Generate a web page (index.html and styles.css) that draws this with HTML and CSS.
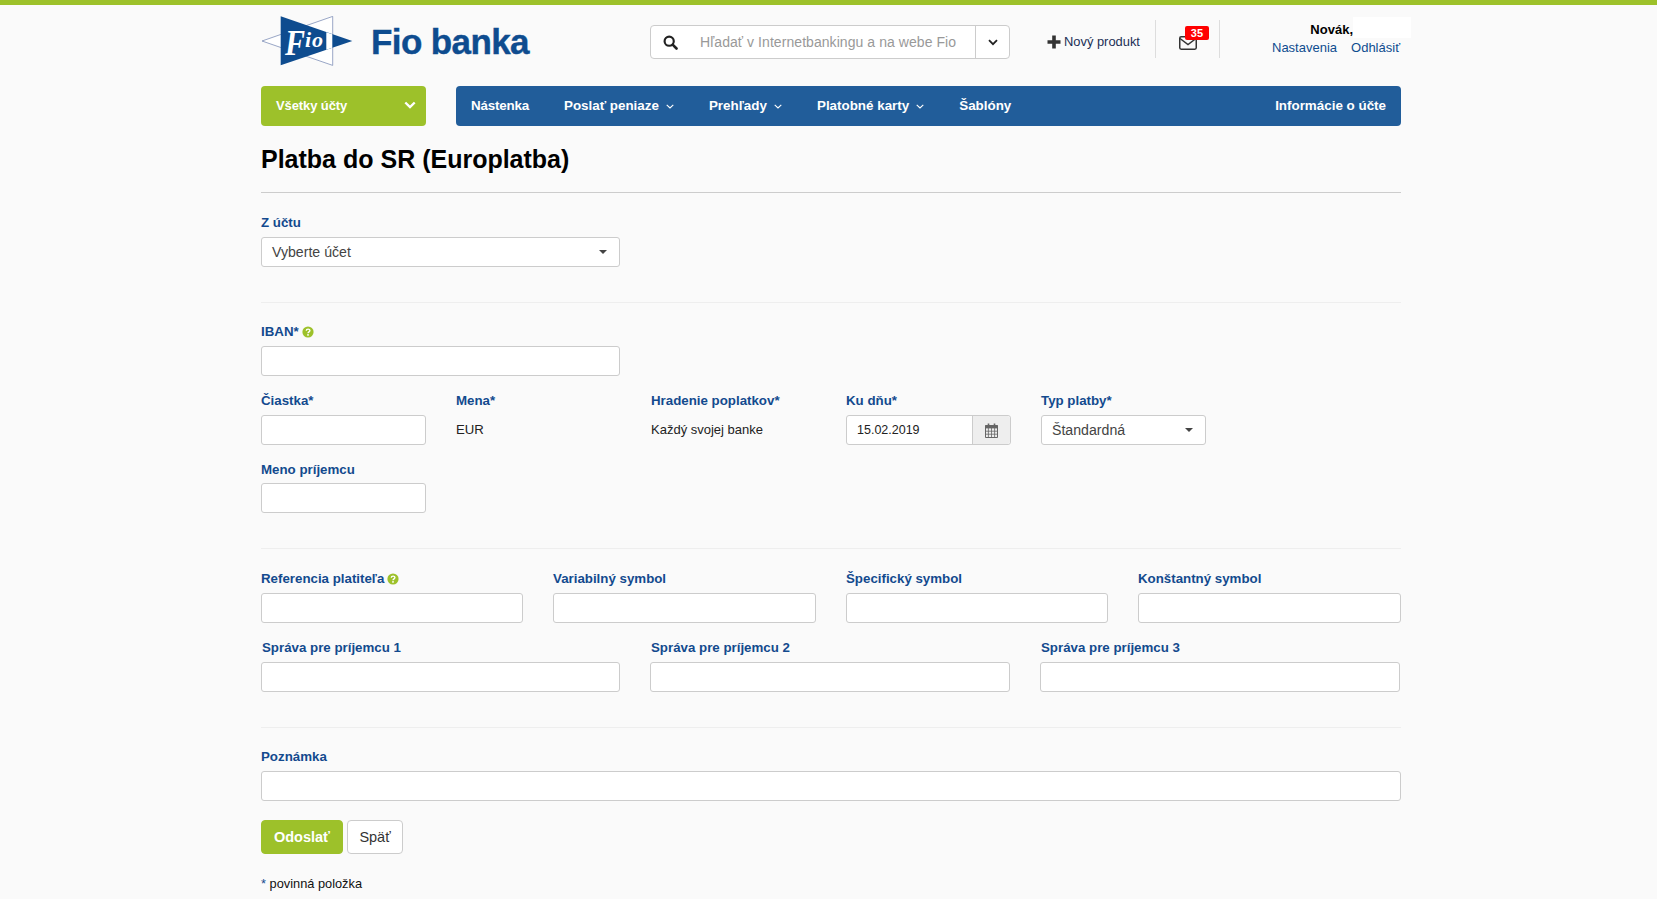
FILE: index.html
```html
<!DOCTYPE html>
<html lang="sk">
<head>
<meta charset="utf-8">
<title>Fio banka</title>
<link rel="stylesheet" href="styles.css">
</head>
<body>
<div class="topline"></div>
<div class="page">
  <header class="header">
    <a class="brand">
      <svg class="logo" viewBox="0 0 92 50" width="92" height="50">
        <polygon points="1,25 71.7,0.4 71.7,49.4" fill="#fff" stroke="#7f8fb8" stroke-width="0.8"/>
        <polygon points="19.7,0.3 91.3,25 19.7,49.3" fill="#0e4c8f"/>
        <polygon points="65.3,16.2 71.3,18.2 71.3,31.8 65.3,33.8" fill="#fff"/>
        <text transform="translate(24 39) scale(1 1.2)" class="logo-f">F</text>
        <text x="44" y="31" class="logo-io">io</text>
      </svg>
      <span class="wordmark">Fio banka</span>
    </a>
    <div class="search">
      <span class="search-icon">
        <svg viewBox="0 0 16 16" width="15" height="15"><circle cx="6.6" cy="6.6" r="4.9" fill="none" stroke="#222" stroke-width="2.3"/><path d="M10.3 10.3 14.4 14.4" stroke="#222" stroke-width="2.8" stroke-linecap="round"/></svg>
      </span>
      <span class="search-text">Hľadať v Internetbankingu a na webe Fio</span>
      <span class="search-toggle">
        <svg viewBox="0 0 10 7" width="10" height="7"><path d="M1 1.2 5 5.2 9 1.2" fill="none" stroke="#222" stroke-width="1.8"/></svg>
      </span>
    </div>
    <a class="new-product">
      <svg viewBox="0 0 14 14" width="14" height="14"><path d="M7 0.5V13.5M0.5 7H13.5" stroke="#333" stroke-width="3.6"/></svg>
      <span>Nový produkt</span>
    </a>
    <div class="mail">
      <svg viewBox="0 0 18 14" width="18" height="14"><rect x="0.75" y="0.75" width="16.5" height="12.5" rx="1.4" fill="none" stroke="#333" stroke-width="1.5"/><path d="M1 2.5 9 8.5 17 2.5" fill="none" stroke="#333" stroke-width="1.5"/></svg>
      <span class="badge">35</span>
    </div>
    <div class="user">
      <div class="user-name"><b>Novák,</b><span class="user-mask"></span></div>
      <div class="user-links"><a>Nastavenia</a><a>Odhlásiť</a></div>
    </div>
  </header>

  <nav class="navs">
    <a class="accounts"><span>Všetky účty</span>
      <svg viewBox="0 0 12 8" width="12" height="8"><path d="M1.3 1.5 6 6 10.7 1.5" fill="none" stroke="#fff" stroke-width="2.4"/></svg>
    </a>
    <div class="menu">
      <a class="menu-first">Nástenka</a>
      <a>Poslať peniaze<svg class="caret" viewBox="0 0 8 5" width="8" height="5"><path d="M.7 .8 4 4 7.3 .8" fill="none" stroke="#fff" stroke-width="1.1"/></svg></a>
      <a>Prehľady<svg class="caret" viewBox="0 0 8 5" width="8" height="5"><path d="M.7 .8 4 4 7.3 .8" fill="none" stroke="#fff" stroke-width="1.1"/></svg></a>
      <a>Platobné karty<svg class="caret" viewBox="0 0 8 5" width="8" height="5"><path d="M.7 .8 4 4 7.3 .8" fill="none" stroke="#fff" stroke-width="1.1"/></svg></a>
      <a>Šablóny</a>
      <a class="menu-right">Informácie o účte</a>
    </div>
  </nav>

  <h1 class="title">Platba do SR (Europlatba)</h1>

  <form class="form">
    <section class="sec sec-account">
      <div class="grid g-3">
        <div class="field"><label>Z účtu</label><div class="control select">Vyberte účet<i class="tri"></i></div></div>
      </div>
    </section>

    <section class="sec sec-main">
      <div class="grid g-3">
        <div class="field"><label>IBAN*<svg class="help" viewBox="0 0 12 12" width="12" height="12"><circle cx="6" cy="6" r="5.6" fill="#9dc12a"/><path d="M4.3 4.7C4.3 2.6 7.9 2.6 7.9 4.6 7.9 5.9 6 5.8 6 7.3" fill="none" stroke="#fff" stroke-width="1.4"/><rect x="5.2" y="8.1" width="1.6" height="1.6" fill="#fff"/></svg></label><div class="control"></div></div>
      </div>
      <div class="grid g-6 row">
        <div class="field"><label>Čiastka*</label><div class="control"></div></div>
        <div class="field"><label>Mena*</label><div class="static">EUR</div></div>
        <div class="field"><label>Hradenie poplatkov*</label><div class="static small">Každý svojej banke</div></div>
        <div class="field"><label>Ku dňu*</label>
          <div class="date"><span class="date-val">15.02.2019</span><span class="date-btn">
            <svg viewBox="0 0 13 15" width="13" height="15"><path d="M.5 2.5h12v12H.5z" fill="none" stroke="#666" stroke-width="1"/><rect x="0.5" y="2" width="12" height="3.4" fill="#666"/><path d="M3.5 0.5v2.8M9.5 0.5v2.8" stroke="#666" stroke-width="1.6"/><path d="M.5 8.2h12M.5 11.2h12M3.4 5v9.5M6.5 5v9.5M9.6 5v9.5" stroke="#666" stroke-width=".8"/></svg>
          </span></div>
        </div>
        <div class="field"><label>Typ platby*</label><div class="control select">Štandardná<i class="tri"></i></div></div>
      </div>
      <div class="grid g-6 row">
        <div class="field tight"><label>Meno príjemcu</label><div class="control"></div></div>
      </div>
    </section>

    <section class="sec sec-symbols">
      <div class="grid g-4">
        <div class="field"><label>Referencia platiteľa<svg class="help" viewBox="0 0 12 12" width="12" height="12"><circle cx="6" cy="6" r="5.6" fill="#9dc12a"/><path d="M4.3 4.7C4.3 2.6 7.9 2.6 7.9 4.6 7.9 5.9 6 5.8 6 7.3" fill="none" stroke="#fff" stroke-width="1.4"/><rect x="5.2" y="8.1" width="1.6" height="1.6" fill="#fff"/></svg></label><div class="control"></div></div>
        <div class="field"><label>Variabilný symbol</label><div class="control"></div></div>
        <div class="field"><label>Špecifický symbol</label><div class="control"></div></div>
        <div class="field"><label>Konštantný symbol</label><div class="control"></div></div>
      </div>
      <div class="grid g-3 row">
        <div class="field"><label class="nudge">Správa pre príjemcu 1</label><div class="control"></div></div>
        <div class="field"><label class="nudge">Správa pre príjemcu 2</label><div class="control"></div></div>
        <div class="field"><label class="nudge">Správa pre príjemcu 3</label><div class="control"></div></div>
      </div>
    </section>

    <section class="sec sec-note">
      <div class="field"><label>Poznámka</label><div class="control"></div></div>
      <div class="buttons">
        <a class="btn btn-primary">Odoslať</a>
        <a class="btn">Späť</a>
      </div>
      <p class="required"><span>*</span> povinná položka</p>
    </section>
  </form>
</div>
</body>
</html>
```

FILE: styles.css
```css
* { box-sizing: border-box; }
html, body { margin: 0; height: 899px; overflow: hidden; }
body {
  background: #fafafa;
  font-family: "Liberation Sans", Arial, sans-serif;
  font-size: 14px;
  color: #222;
}
.topline { height: 5px; background: #9dc12a; }
.page { width: 1140px; margin-left: 261px; }

.header { height: 81px; display: flex; align-items: flex-start; position: relative; }
.brand { display: flex; align-items: flex-start; width: 389px; padding-top: 11px; }
.logo { display: block; flex: none; }
.logo-f { font-family: "Liberation Serif", serif; font-style: italic; font-weight: bold; font-size: 30px; fill: #fff; }
.logo-io { font-family: "Liberation Serif", serif; font-style: italic; font-weight: bold; font-size: 22px; fill: #fff; letter-spacing: 1px; }
.wordmark {
  margin-left: 18px; margin-top: 4px; font-size: 35px; line-height: 44px; font-weight: bold;
  letter-spacing: -0.6px; -webkit-text-stroke: 0.4px #0e4c8f;
  color: #0e4c8f; white-space: nowrap;
}
.search {
  margin-top: 20px; width: 360px; height: 34px; flex: none;
  display: flex; align-items: center;
  background: #fff; border: 1px solid #ccc; border-radius: 4px;
}
.search-icon { width: 49px; padding-left: 12px; display: flex; }
.search-text { flex: 1; color: #999; font-size: 14px; letter-spacing: 0.06px; white-space: nowrap; }
.search-toggle { width: 34px; height: 32px; border-left: 1px solid #ccc; display: flex; align-items: center; justify-content: center; }
.new-product { margin-left: 37px; margin-top: 30px; display: flex; align-items: center; gap: 3px; line-height: 14px; color: #1a2f55; font-size: 12.9px; white-space: nowrap; }
.mail {
  margin-left: 15px; margin-top: 15px; width: 65px; height: 38px; flex: none;
  border-left: 1px solid #ddd; border-right: 1px solid #ddd;
  position: relative;
}
.mail svg { position: absolute; left: 23px; top: 16px; }
.badge {
  position: absolute; left: 29px; top: 6px; width: 24px; height: 14px;
  background: #f00; color: #fff; border-radius: 2px;
  font-size: 11px; font-weight: bold; line-height: 14px; text-align: center;
}
.user { flex: 1; text-align: right; font-size: 13px; line-height: 18px; padding-top: 16px; }
.user-name { display: flex; justify-content: flex-end; align-items: flex-start; color: #000; margin-right: -10px; }
.user-mask { display: block; width: 58px; height: 21px; background: #fff; margin-top: -4px; }
.user-links { display: flex; justify-content: flex-end; gap: 14px; color: #0e4c8f; margin-right: 1px; }

.navs { display: flex; gap: 30px; height: 40px; }
.accounts {
  width: 165px; background: #9dc12a; border-radius: 4px; color: #fff; font-weight: bold; font-size: 13px; letter-spacing: -0.1px;
  display: flex; align-items: center; justify-content: space-between; padding: 0 10px 2px 15px;
}
.menu {
  flex: 1; background: #215d9a; border-radius: 4px; color: #fff; font-weight: bold; font-size: 13.4px;
  display: flex; align-items: center; gap: 35px; padding: 0 15px 2px;
}
.menu a { white-space: nowrap; }
.menu .menu-first { letter-spacing: -0.2px; }
.caret { margin-left: 7px; vertical-align: 1px; }
.menu-right { margin-left: auto; }

.title { margin: 19px 0 0; font-size: 25px; line-height: 28px; font-weight: bold; color: #000; padding-bottom: 19px; border-bottom: 1px solid #ccc; }

.sec { border-bottom: 1px solid #eee; }
.sec-account { padding-top: 21px; padding-bottom: 35px; }
.sec-main { padding-top: 20px; padding-bottom: 35px; }
.sec-symbols { padding-top: 21px; padding-bottom: 35px; }
.sec-note { padding-top: 20px; border-bottom: 0; }

.grid { display: grid; column-gap: 30px; }
.g-3 { grid-template-columns: 359px 360px 360px; }
.g-4 { grid-template-columns: 262px 263px 262px 263px; }
.g-6 { grid-template-columns: repeat(6, 165px); }
.row { margin-top: 16px; }

label {
  display: block; height: 18px; line-height: 18px; margin-bottom: 5px;
  font-weight: bold; font-size: 13.3px; color: #134a8e; white-space: nowrap;
}
.tight label { margin-bottom: 4px; }
.nudge { padding-left: 1px; }
.help { vertical-align: -2px; margin-left: 3px; }
.control {
  height: 30px; background: #fff; border: 1px solid #ccc; border-radius: 3px;
  line-height: 28px; padding-left: 10px; font-size: 14.15px; color: #444; position: relative;
}
.tri {
  position: absolute; right: 12px; top: 12px; width: 0; height: 0;
  border-left: 4px solid transparent; border-right: 4px solid transparent; border-top: 4px solid #444;
}
.static { height: 30px; line-height: 30px; font-size: 13.2px; color: #222; }
.static.small { font-size: 13px; }
.date { height: 30px; display: flex; background: #fff; border: 1px solid #ccc; border-radius: 3px; font-size: 12.5px; color: #222; }
.date-val { flex: 1; padding-left: 10px; line-height: 28px; }
.date-btn { width: 38px; background: #eee; border-left: 1px solid #ccc; display: flex; align-items: center; justify-content: center; border-radius: 0 3px 3px 0; }

.buttons { display: flex; gap: 4px; margin-top: 19px; }
.btn {
  height: 34px; line-height: 32px; padding: 0; background: #fff; border: 1px solid #ccc; border-radius: 4px;
  color: #333; font-size: 14.5px; width: 56px; text-align: center;
}
.btn-primary { background: #9dc12a; border-color: #9dc12a; color: #fff; font-weight: bold; width: 82px; }
.required { margin: 22px 0 0; font-size: 12.8px; line-height: 16px; color: #111; }
.required span { color: #134a8e; }
```
